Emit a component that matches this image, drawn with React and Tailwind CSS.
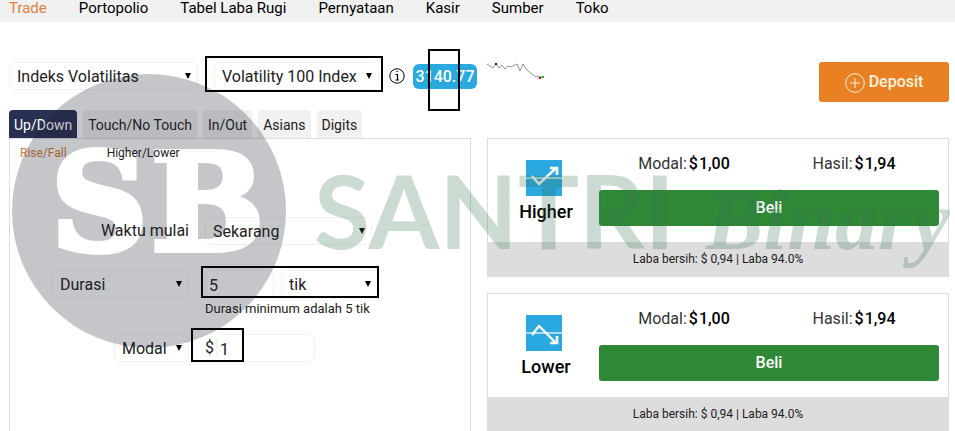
import React from "react";

const navItems = ["Trade", "Portopolio", "Tabel Laba Rugi", "Pernyataan", "Kasir", "Sumber", "Toko"];

const tabs = ["Up/Down", "Touch/No Touch", "In/Out", "Asians", "Digits"];

const contracts = [
  { name: "Higher", line: "M6 16L13 24L29 9", head: "M24 8H31V15" },
  { name: "Lower", line: "M6 20L13 11L29 27", head: "M24 28H31V21" },
];

function Select({ label, value, className = "" }) {
  return (
    <span className={`relative block ${className}`}>
      <select
        aria-label={label}
        className="block h-7 w-full appearance-none rounded-md border border-black/5 bg-transparent px-[7px] pt-0.5 text-base leading-6 text-[#222]"
      >
        <option>{value}</option>
      </select>
      <svg
        className="pointer-events-none absolute right-[7px] top-[11px] h-1.5 w-1.5"
        viewBox="0 0 6 6"
        aria-hidden="true"
      >
        <path d="M0 0H6L3 6Z" fill="#000" />
      </svg>
    </span>
  );
}

function Amount({ label, value }) {
  return (
    <p className="flex justify-center gap-0.5 text-base leading-5">
      <span className="text-[#333]">{label}:</span>
      <b className="flex gap-px font-medium text-black">
        <span>$</span>
        <span>{value}</span>
      </b>
    </p>
  );
}

function ContractCard({ name, line, head }) {
  return (
    <section className="border border-[#ddd]">
      <div className="flex h-[103px] pr-[9px]">
        <div className="flex w-[111px] shrink-0 flex-col items-center pl-[5px] pt-[21px]">
          <svg className="mr-1 h-9 w-9" viewBox="0 0 36 36" aria-hidden="true">
            <rect width="36" height="36" fill="#2aa8e0" />
            <path d="M0 18H36" stroke="#d5eef9" strokeWidth="1.6" />
            <path d={line} fill="none" stroke="#fff" strokeWidth="2.4" />
            <path d={head} fill="none" stroke="#fff" strokeWidth="2.6" />
          </svg>
          <h2 className="mt-1 text-lg leading-6 font-medium text-black">{name}</h2>
        </div>
        <div className="flex-1 pt-[15px]">
          <div className="grid grid-cols-2">
            <Amount label="Modal" value="1,00" />
            <Amount label="Hasil" value="1,94" />
          </div>
          <button className="mt-4 h-9 w-full rounded-[3px] bg-[#2e8836] text-base font-medium text-white">
            Beli
          </button>
        </div>
      </div>
      <p className="bg-[#ddd] py-2 text-center text-xs leading-[18px] text-[#222]">
        Laba bersih: $ 0,94 | Laba 94.0%
      </p>
    </section>
  );
}

// Brand mark laid over the whole trading screen
function Watermark() {
  return (
    <svg
      className="pointer-events-none absolute left-0 top-0 h-[431px] w-[955px]"
      viewBox="0 0 955 431"
    >
      <mask id="initials">
        <rect width="955" height="431" fill="#fff" />
        <g
          fontSize="134"
          fontWeight="700"
          fontFamily="DejaVu Serif, serif"
          fill="#000"
          stroke="#000"
          strokeWidth="6"
        >
          <text x="51" y="250">S</text>
          <text x="151" y="250">B</text>
        </g>
      </mask>
      <circle cx="149" cy="211" r="137" fill="#1c2030" opacity="0.25" mask="url(#initials)" />
      <g fill="#387450" opacity="0.25">
        <text x="314" y="249" fontSize="102" fontWeight="700" fontFamily="Lato, sans-serif">
          SANTRI
        </text>
        <text x="706" y="249" fontSize="86" fontWeight="700" fontStyle="italic" fontFamily="Liberation Serif, serif">
          Binary
        </text>
      </g>
    </svg>
  );
}

export default function App() {
  return (
    <div className="relative h-screen overflow-hidden bg-white font-[Roboto,sans-serif] text-[#222]">
      {/* Navigation */}
      <nav className="flex gap-8 bg-[#f1f1f1] pb-1.5 pl-[9px] text-[15px] leading-4 text-black">
        {navItems.map((item, i) => (
          <a key={item} href="#" className={i === 0 ? "text-[#e2803f]" : ""}>
            {item}
          </a>
        ))}
      </nav>

      <main className="pl-[9px] pr-1.5 pt-10">
        {/* Market picker */}
        <div className="flex h-12 items-start">
          <Select label="Pasar" value="Indeks Volatilitas" className="w-[189px]" />
          <div className="relative ml-4">
            <Select label="Aset" value="Volatility 100 Index" className="w-[165px]" />
            <span className="pointer-events-none absolute -bottom-0.5 -left-[9px] -right-1 -top-1.5 border-2 border-black" />
          </div>
          <svg className="ml-2.5 mt-1.5 h-4 w-4" viewBox="0 0 16 16" fill="none" stroke="#000">
            <circle cx="8" cy="8" r="7.2" />
            <path d="M6.5 6.5H8.5V12M6.5 12H10M7.5 3.5H8.8" strokeWidth="1.2" />
          </svg>
          <div className="relative ml-2 mt-0.5 h-[25px] w-16 rounded-md bg-[#2aa8e0] text-center text-base leading-[25px] font-medium text-white">
            3140.77
            <span className="absolute -bottom-[22px] -top-[15px] left-[15px] w-8 border-2 border-black" />
          </div>
          <svg className="ml-2.5 h-5 w-[60px]" viewBox="0 0 60 20" fill="none">
            <path
              d="M0 2L6 6L9 2L12 6L15 3L18 7L21 4L24 5L28 3L30 2L33 9L36 2L40 8L45 12L49 15L53 14L55 16"
              stroke="#777"
              strokeWidth="0.8"
            />
            <rect x="8" y="1" width="2" height="2" fill="#00a" />
            <rect x="52" y="15" width="2" height="2" fill="#e00" />
            <rect x="55" y="14" width="2" height="2" fill="#0c0" />
          </svg>
          <button className="ml-auto flex h-10 w-[130px] items-center justify-center gap-1 rounded-[3px] bg-[#e98024] text-base font-medium text-[#fff3df]">
            <svg className="mt-0.5 h-5 w-5" viewBox="0 0 20 20" fill="none" stroke="currentColor">
              <circle cx="10" cy="10" r="9.3" />
              <path d="M10 5V15M5 10H15" />
            </svg>
            Deposit
          </button>
        </div>

        {/* Contract tabs */}
        <div className="flex gap-1.5 text-sm">
          {tabs.map((tab, i) => (
            <button
              key={tab}
              className={`h-7 rounded-t-sm px-[5px] pt-0.5 ${
                i === 0 ? "bg-[#2a3052] text-white" : "bg-[#f1f1f1] text-[#222]"
              }`}
            >
              {tab}
            </button>
          ))}
        </div>

        <div className="grid grid-cols-2 gap-4">
          {/* Trade form */}
          <form className="border border-[#ddd]">
            <div className="flex gap-10 pl-2.5 pt-1.5 text-xs leading-4">
              <a href="#" className="text-[#d27a35]">Rise/Fall</a>
              <a href="#">Higher/Lower</a>
            </div>

            <div className="mt-14 grid grid-cols-[179px_1fr] gap-x-4 text-base">
              <label htmlFor="start" className="text-right leading-7">Waktu mulai</label>
              <span className="relative block w-[167px]">
                <select
                  id="start"
                  className="block h-7 w-full appearance-none rounded-md border border-black/5 bg-transparent px-[7px] pt-0.5 text-base leading-6 text-[#222]"
                >
                  <option>Sekarang</option>
                </select>
                <svg
                  className="pointer-events-none absolute right-[7px] top-[11px] h-1.5 w-1.5"
                  viewBox="0 0 6 6"
                  aria-hidden="true"
                >
                  <path d="M0 0H6L3 6Z" fill="#000" />
                </svg>
              </span>

              <Select label="Durasi" value="Durasi" className="mt-[25px] w-[137px] justify-self-end" />
              <div className="mt-[25px]">
                <div className="relative flex w-[173px] gap-[7px]">
                  <input
                    aria-label="Lama durasi"
                    defaultValue="5"
                    className="h-7 w-[69px] rounded-md border border-black/5 px-[3px] pt-0.5"
                  />
                  <Select label="Satuan durasi" value="tik" className="flex-1" />
                  <span className="pointer-events-none absolute -left-1 -right-px -top-1 bottom-0 border-2 border-black" />
                </div>
                <p className="text-[13px] leading-[22px]">Durasi minimum adalah 5 tik</p>
              </div>

              <Select label="Jenis jumlah" value="Modal" className="mt-3.5 w-[75px] justify-self-end" />
              <div className="relative mt-3.5 flex gap-0.5">
                <span className="leading-7">$</span>
                <input
                  aria-label="Modal"
                  defaultValue="1"
                  className="h-7 w-[99px] rounded-md border border-black/5 px-[3px] pt-0.5"
                />
                <span className="pointer-events-none absolute -left-3.5 -top-1.5 bottom-0 w-[53px] border-2 border-black" />
              </div>
            </div>
          </form>

          {/* Buy panels */}
          <div className="flex flex-col gap-4">
            {contracts.map((c) => (
              <ContractCard key={c.name} {...c} />
            ))}
          </div>
        </div>
      </main>

      <Watermark />
    </div>
  );
}
